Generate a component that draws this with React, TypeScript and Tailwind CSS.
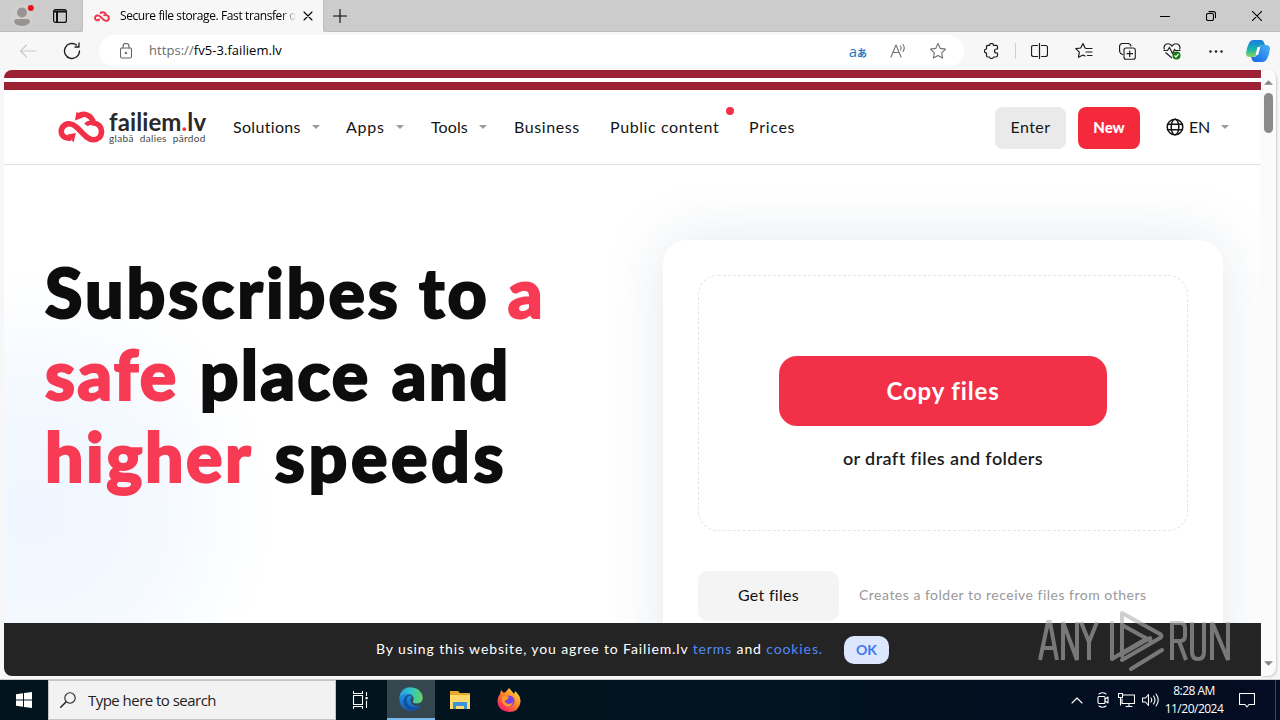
import { ReactNode } from "react";

function Caret() {
  return <svg viewBox="0 0 8 4" className="h-1 w-2 shrink-0"><path d="M0 0h8L4 4z" fill="#9b9b9b" /></svg>;
}

function CloudLogo({ className, color }: { className: string; color: string }) {
  return (
    <svg viewBox="0 0 46 32" className={className} fill="none" stroke={color} strokeWidth="5.600" strokeLinejoin="round">
      <path d="M20 5C25 1.500 33 3.500 35 12C40 12.500 43 16 43 20.500C43 26 39 29 34.500 28.800C29 28.600 25 23 20 18C16 14 12.500 11.700 8.500 13C3 14.800 1.500 20 3.800 24C5.500 26.500 8.500 27.500 12.500 27" />
      <path d="M35.500 12C31 11 29 12 27.500 14" strokeWidth="4.500" />
      <path d="M18 0.500l-1.500 9l8-3zM9 23.500l8.500-1.500l-2.500 9.500z" fill={color} strokeWidth="0" />
    </svg>
  );
}

function Icon({ children, className = "size-[18px]", view = "0 0 18 18" }: { children: ReactNode; className?: string; view?: string }) {
  return (
    <svg viewBox={view} className={`${className} shrink-0`} fill="none" stroke="currentColor" strokeWidth="1.1" strokeLinecap="round" strokeLinejoin="round">
      {children}
    </svg>
  );
}

function TabBar() {
  return (
    <div className="flex h-8 shrink-0 items-stretch bg-[#cccccc]">
      <div className="flex w-[83px] items-center rounded-br-[6px] border-b border-r border-[#bdbdbd]">
        <svg viewBox="0 0 24 24" className="ml-[10px] size-6">
          <circle cx="12" cy="12" r="11.500" fill="#d2d0ce" />
          <circle cx="12" cy="8.500" r="5" fill="#979593" />
          <path d="M4 18q0-3 3-3h10q3 0 3 3q-2 4-8 4t-8-4" fill="#979593" />
          <circle cx="20.800" cy="4" r="3" fill="#e81123" />
        </svg>
        <svg viewBox="0 0 14 14" className="ml-[19px] size-[14px]" fill="none" stroke="#111">
          <rect x=".6" y=".6" width="12.800" height="12.800" rx="2" strokeWidth="1.200" />
          <path d="M1 2.500h12M4 3v10" strokeWidth="2" />
        </svg>
      </div>
      <div className="flex w-[240px] shrink-0 items-center bg-[#f7f7f7] pl-[11px]">
        <CloudLogo className="h-[11px] w-4 shrink-0" color="#f23148" />
        <div className="ml-[10px] w-[176px] shrink-0 overflow-hidden whitespace-nowrap bg-linear-to-r from-black from-90% to-[#f7f7f7] bg-clip-text text-[12px] tracking-[-0.4px] text-transparent">Secure file storage. Fast transfer o</div>
        <Icon className="ml-[7px] size-[10px] text-black" view="0 0 10 10"><path d="M1 1l8 8M9 1l-8 8" /></Icon>
      </div>
      <div className="flex flex-1 items-center rounded-bl-[6px] border-b border-l border-[#bdbdbd] text-black">
        <Icon className="ml-[9px] size-[14px]" view="0 0 14 14"><path d="M.5 7h13M7 .5v13" /></Icon>
        <div className="flex-1" />
        <Icon className="size-[10px]" view="0 0 10 10"><path d="M0 5.500h10" strokeWidth="1" /></Icon>
        <Icon className="ml-9 size-[10px]" view="0 0 10 10"><rect x=".5" y="2.500" width="7" height="7" rx="1.500" /><path d="M3 .6h4.500q2 0 2 2v4" /></Icon>
        <Icon className="ml-9 mr-[18px] size-[10px]" view="0 0 10 10"><path d="M.3.3l9.400 9.400M9.700.3L.3 9.700" /></Icon>
      </div>
    </div>
  );
}

function Toolbar() {
  return (
    <div className="flex h-[38px] shrink-0 items-center bg-[#f7f7f7] text-[#1b1b1b]">
      <Icon className="ml-[19px] h-[14px] w-[18px] text-[#c9c9c9]" view="0 0 18 14"><path d="M17 7H1.500M7.500 1l-6 6l6 6" /></Icon>
      <Icon className="ml-[26px] size-[18px]"><path d="M16.500 9a7.500 7.500 0 1 1-3-6M16 1v4h-4" strokeWidth="1.300" /></Icon>
      <div className="ml-[18px] flex h-8 w-[865px] shrink-0 items-center rounded-full bg-white">
        <Icon className="ml-[21px] h-4 w-3 text-[#666]" view="0 0 12 16"><rect x=".5" y="5" width="11" height="10" rx="1.500" /><path d="M3 5V3.500q0-3 3-3t3 3V5" /><circle cx="6" cy="10" r=".6" fill="currentColor" /></Icon>
        <span className="ml-[17px] text-[13px] tracking-[0.05px] text-[#6b6b6b]">https://<span className="text-black">fv5-3.failiem.lv</span></span>
        <div className="flex-1" />
        <span className="flex items-baseline leading-none text-[#1f78c8]"><span className="text-[15px]">a</span><span className="font-['Noto_Sans_CJK_JP',sans-serif] text-[10px] font-bold leading-none">あ</span></span>
        <Icon className="ml-[23px] h-4 w-[17px] text-[#707070]" view="0 0 17 16"><path d="M1 14L6 2l5 12M3 9.500h6M10.500 3q1.500 2 0 4M13 1.500q2.500 3.500 0 7" /></Icon>
        <Icon className="ml-[22px] mr-[17px] size-[18px] text-[#707070]"><path d="M9 1.500l2.300 4.900l5.200.7l-3.800 3.700l.9 5.300L9 13.600l-4.600 2.500l.9-5.300L1.500 7.100l5.200-.7z" /></Icon>
      </div>
      <Icon className="ml-5 size-4" view="0 0 16 16"><path strokeWidth="1.200" d="M2.500 3q.5-.6 1.500-.6h1.500q.2-2 2-2t2 2H12q1.500 0 1.500 1.500V6h-1q-2 0-2 2t2 2h1v2.500q0 1.500-1.500 1.500H9.500q-.2 1.500-2 1.500t-2-1.500H4q-1.500 0-1.500-1.500V10Q.4 9.800.4 8t2.100-2z" /></Icon>
      <div className="ml-[15px] h-4 w-px shrink-0 bg-[#cfcfcf]" />
      <Icon className="ml-[15px] h-4 w-[17px]" view="0 0 17 16"><path strokeWidth="1.200" d="M6.500 2.500h-4q-2 0-2 2v7q0 2 2 2h4M10.500 2.500h4q2 0 2 2v7q0 2-2 2h-4M8.500 .5v15" /></Icon>
      <Icon className="ml-[27px] size-[18px]"><path strokeWidth="1.200" d="M11.500 6.500L10 6L8 1.500L5.700 6L.8 6.700L4.300 10.200L3.500 15.300L8 13l2 1M11.500 6.500h5.500M11 10h6M12.500 13.500H17" /></Icon>
      <Icon className="ml-[26px] size-[17px]" view="0 0 17 17"><rect x="5" y="5" width="11.300" height="11.300" rx="2" /><path strokeWidth="1.200" d="M10.700 8v5.500M8 10.700h5.500M3.500 11.500q-2.500-1-2.900-3L.5 3.500q.2-2.500 2.500-3h6q2.500.2 3 2.500" /></Icon>
      <svg viewBox="0 0 18 18" className="ml-[27px] size-[18px] shrink-0" fill="none" stroke="#222" strokeWidth="1.200"><path d="M1.500 7.500Q0 3.500 3.500 2Q6.500 1 9 4Q11.500 1 14.500 2Q18 3.500 16.500 7.500M2.500 10.500L9 16M.5 8.500h4l2-3l3 6l2-4l1 1h5" /><circle cx="13.500" cy="13.500" r="4" fill="#107c10" stroke="none" /><path d="M11.500 13.500l1.500 1.500l2.500-3" stroke="white" /></svg>
      <svg viewBox="0 0 14 3" className="ml-[28px] h-[3px] w-[14px] shrink-0" fill="#222"><circle cx="1.500" cy="1.500" r="1.300" /><circle cx="7" cy="1.500" r="1.300" /><circle cx="12.500" cy="1.500" r="1.300" /></svg>
      <svg viewBox="0 0 24 24" className="ml-[23px] size-6 shrink-0">
        <defs>
          <linearGradient id="cpA" x1="0" y1="0" x2="0" y2="1"><stop stopColor="#1b7ce4" /><stop offset=".55" stopColor="#16b5a9" /><stop offset="1" stopColor="#8fd45e" /></linearGradient>
          <linearGradient id="cpB" x1="1" y1="0" x2="0" y2="1"><stop stopColor="#4cb3f4" /><stop offset="1" stopColor="#1464e8" /></linearGradient>
        </defs>
        <path d="M17 23H9q-2 0-2.800-2L5 18h3q2 0 2.700-2l2.500-8Q14 6 16 6h4q4 0 4 3.500Q23.500 15 21 20q-1.500 3-4 3" fill="url(#cpB)" />
        <path d="M7 1h8q2 0 2.800 2L19 6h-3q-2 0-2.700 2l-2.500 8q-.8 2-2.800 2H4q-4 0-4-3.500Q.5 9 3 4Q4.500 1 7 1" fill="url(#cpA)" />
        <path d="M11.500 8h2.800l-2.200 8H9.500z" fill="white" />
      </svg>
    </div>
  );
}

function Header() {
  return (
    <div className="flex h-[75px] shrink-0 items-center border-b border-[#e0e0e0] bg-white text-[16px] text-[#151515]">
      <CloudLogo className="ml-[54px] h-8 w-[47px] shrink-0" color="#f23148" />
      <div className="ml-1 w-[99px] shrink-0 whitespace-nowrap">
        <div className="text-[24px] font-bold leading-[22px] tracking-[0.1px] text-[#292929]">failiem<span className="text-[#f23148]">.</span>lv</div>
        <div className="text-[10px] leading-[10px] tracking-[0.35px] text-[#444] [word-spacing:3px]">glabā dalies pārdod</div>
      </div>
      <nav className="ml-[25px] flex items-center whitespace-nowrap">
        <div className="flex w-[113px] items-center gap-[11px]"><span className="tracking-[0.33px]">Solutions</span><Caret /></div>
        <div className="flex w-[85px] items-center gap-[11px]"><span className="tracking-[0.75px]">Apps</span><Caret /></div>
        <div className="flex w-[83px] items-center gap-[11px]"><span className="tracking-[0.1px]">Tools</span><Caret /></div>
        <span className="w-24 tracking-[0.6px]">Business</span>
        <span className="relative w-[139px] tracking-[0.6px]">Public content<i className="absolute left-[116px] top-[-8px] size-2 rounded-full bg-[#f23148]" /></span>
        <span className="w-[60px] tracking-[0.7px]">Prices</span>
      </nav>
      <div className="flex-1" />
      <div className="mt-px flex h-[42px] w-[71px] shrink-0 items-center justify-center rounded-lg bg-[#eaeaea] pb-px tracking-[0.4px]">Enter</div>
      <div className="ml-3 mt-px flex h-[42px] w-[62px] shrink-0 items-center justify-center rounded-lg bg-[#f4293c] text-[15px] font-black text-white">New</div>
      <Icon className="ml-[26px] size-[18px]"><g strokeWidth="1.500"><circle cx="9" cy="9" r="7.800" /><ellipse cx="9" cy="9" rx="3.800" ry="7.800" /><path d="M1.500 6.300h15M1.500 11.700h15" /></g></Icon>
      <span className="ml-[5px] w-8 shrink-0 tracking-[-0.2px]">EN</span><Caret />
      <div className="w-8 shrink-0" />
    </div>
  );
}

function UploadCard() {
  return (
    <section className="ml-[659px] mt-[75px] h-[440px] w-[560px] rounded-[24px] bg-white px-[35px] pt-[35px] shadow-[0_0_60px_rgba(70,100,130,0.15)]">
      <div className="flex h-[256px] flex-col items-center rounded-[20px] border border-dashed border-[#e5e5e5] pt-20">
        <div className="flex h-[70px] w-[328px] items-center justify-center rounded-[18px] bg-[#f23148] text-[24px] font-bold tracking-[0.85px] text-white">Copy files</div>
        <div className="mt-[18px] text-[18px] font-semibold leading-7 tracking-[0.4px] text-[#1c1c1c]">or draft files and folders</div>
      </div>
      <div className="mt-10 flex items-center whitespace-nowrap">
        <div className="flex h-[50px] w-[141px] items-center justify-center rounded-[10px] bg-[#f4f4f4] pb-0.5 text-[16px] tracking-[0.3px] text-[#111]">Get files</div>
        <span className="ml-5 pb-[3px] text-[14px] tracking-[0.5px] text-[#999]">Creates a folder to receive files from others</span>
      </div>
    </section>
  );
}

function Page() {
  return (
    <main className="flex h-[606px] w-[1257px] flex-col overflow-hidden rounded-tl-lg rounded-bl-lg bg-white font-[Lato,sans-serif]">
      <div className="h-2 shrink-0 bg-[#9b2034]" />
      <div className="h-1 shrink-0 bg-white" />
      <div className="h-2 shrink-0 bg-[#9b2034]" />
      <Header />
      <div className="flex h-[458px] shrink-0 overflow-hidden bg-[radial-gradient(circle_at_30px_345px,#eff6ff_0px,#f4f9ff_120px,#ffffff_240px)]">
        <h1 className="ml-[41px] mt-[86px] w-0 whitespace-nowrap text-[68px] font-black leading-[82px] text-[#0d0d0d] [-webkit-text-stroke:2px_currentColor]">
          <div className="tracking-[3px] [word-spacing:-1px]">Subscribes to <span className="text-[#f73b54]">a</span></div>
          <div className="tracking-[2.2px] [word-spacing:3px]"><span className="text-[#f73b54]">safe</span> place and</div>
          <div className="[word-spacing:2px]"><span className="tracking-[2.5px] text-[#f73b54]">higher</span><span className="tracking-[3.6px]"> speeds</span></div>
        </h1>
        <div className="-ml-[41px] shrink-0"><UploadCard /></div>
      </div>
      <div className="flex h-[53px] shrink-0 items-center whitespace-nowrap bg-[#242424] pl-[372px] text-[14px] text-white">
        <span className="w-[448px] pb-0.5 tracking-[0.88px]">By using this website, you agree to Failiem.lv <span className="text-[#5389f5]">terms</span> and <span className="text-[#5389f5]">cookies.</span></span>
        <div className="ml-5 flex h-[28px] w-[45px] items-center justify-center rounded-[10px] bg-[#dce6fc] font-bold text-[#3b78ee]">OK</div>
      </div>
    </main>
  );
}

function Watermark() {
  return (
    <div className="absolute left-[1038px] top-[608px] h-16 w-[194px] opacity-60">
      <svg viewBox="0 0 194 64" className="h-16 w-[194px]" fill="none" stroke="#b0b0b0" strokeWidth="4">
        <path d="M2 52L10 14h2l7 38M5 40h12M25 52V14l14 38V14M43 14l8 20l8-20M51 33v19" />
        <path d="M74 15v36l10-6l24-14M84 48V5l38 21q3 2 0 4l-38 22M84 17l31 17M93 61l31-19M84 16v30l28-16" strokeLinejoin="round" strokeLinecap="round" />
        <path d="M134 52V15h8q5 0 5 5v8q0 5-5 5h-8M141 33l7 19M154 14v30q0 7 6 7t6-7V14M174 52V14l16 38V14" />
      </svg>
    </div>
  );
}

function Taskbar() {
  return (
    <div className="flex h-10 shrink-0 items-center bg-linear-to-r from-[#02151e] via-[#02141f] to-[#030c22] text-white">
      <div className="flex w-12 justify-center"><svg viewBox="0 0 16 16" className="size-4" fill="white"><path d="M0 2.300L7 1.300V7.500H0zM8 1.100L16 0v7.500H8zM0 8.500h7v6.200L0 13.700zM8 8.500h8V16L8 14.900z" /></svg></div>
      <div className="flex h-10 w-72 items-center border border-[#c4c4c4] bg-[#f2f2f2] text-[#222]">
        <Icon className="ml-[11px] size-4" view="0 0 16 16"><circle cx="10" cy="6" r="5.200" /><path d="M6 10L.7 15.300" strokeWidth="1.500" /></Icon>
        <span className="ml-3 text-[15px] tracking-[-0.53px]">Type here to search</span>
      </div>
      <div className="flex w-[51px] justify-center"><Icon className="-ml-1 size-[18px]" view="-1 -1 18 18"><path d="M1.500 3.500h9v9h-9zM1.500-.5v2h9v-2M1.500 16.500v-2h9v2M14.500.5v3M14.500 9v6.500M14 5.500h1.200v1.200H14z" /></Icon></div>
      <div className="flex h-10 w-12 items-center justify-center border-b-2 border-[#76b9ed] bg-[#35464f]">
        <svg viewBox="0 0 24 24" className="size-6">
          <defs>
            <linearGradient id="edgeTop" x1="0" x2="1"><stop stopColor="#2c9fe3" /><stop offset=".5" stopColor="#32c4c9" /><stop offset="1" stopColor="#68d45b" /></linearGradient>
            <linearGradient id="edgeSide" x1="0" y1="0" x2="0" y2="1"><stop stopColor="#239be2" /><stop offset="1" stopColor="#1260bd" /></linearGradient>
          </defs>
          <path d="M.3 10Q0 20 8 23.300Q17 26 22 18Q17 21 13 17Q10 13 13 10L6 4z" fill="url(#edgeSide)" />
          <path d="M.5 10Q2 0 12 .2Q23 1 23.800 11Q23.500 16 18 16.500Q13 16.500 14 14Q16 11 12.500 8Q6 4 .5 10" fill="url(#edgeTop)" />
          <path d="M12 8Q7 9 7.500 14Q9 21 18 20Q22 18 22 18Q17 25 10 23Q3 19 5 12Q7 7 12 8" fill="#124f9c" />
        </svg>
      </div>
      <div className="flex w-[49px] justify-center"><svg viewBox="0 0 22 20" className="h-5 w-[22px]"><path d="M1 1h8l2 2h10v16H1z" fill="#e8a72c" /><path d="M1 5h20v14H1z" fill="#ffd96a" /><path d="M4 19v-7h14v7h-3v-3H7v3z" fill="#3995da" /></svg></div>
      <div className="flex w-[49px] justify-center"><svg viewBox="0 0 24 24" className="size-6"><defs><linearGradient id="fox" x1="1" y1="0" x2=".2" y2="1"><stop stopColor="#fff044" /><stop offset=".5" stopColor="#ff8728" /><stop offset="1" stopColor="#f5156b" /></linearGradient></defs><path d="M3 6Q4 3 4 2L7 5Q10 3 12 0Q15 3 17 6Q18 4 18 3Q24 8 23.500 14Q22 24 12 24Q1 23 .5 14Q.5 9 3 6" fill="url(#fox)" /><circle cx="12" cy="13" r="5.500" fill="#7542e5" /><path d="M5 9Q9 7 12 9L10 12Q7 12 8 14Q12 18 16 14Q14 20 9 18Q4 15 5 9" fill="#ff9a28" /></svg></div>
      <div className="flex-1" />
      <Icon className="h-2 w-3" view="0 0 12 8"><path d="M1 7l5-5l5 5" /></Icon>
      <Icon className="ml-[14px] h-4 w-3" view="0 0 12 16"><rect x="1" y="4.500" width="7" height="7" rx="1" /><path d="M8 7l3-2v6l-3-2M2 2Q5.500-.5 9 2M2 14q3.500 2.500 7 0" /></Icon>
      <Icon className="ml-[9px] h-4 w-[17px]" view="0 0 17 16"><path d="M5 3h11.500v8.500H4V7M8 14.500h6M11 11.500v3M.5 1.500h4v4h-4zM2.500 6v7" /></Icon>
      <Icon className="ml-[7px] h-4 w-[17px]" view="0 0 17 16"><path d="M.5 6h3l3-3.500v11L3.500 10h-3zM9 6q1.500 2 0 4M11.500 4q3 4 0 8M14 2q4.500 6 0 12" /></Icon>
      <div className="ml-[5px] flex w-[60px] flex-col items-center whitespace-nowrap text-[12px] leading-[18px] tracking-[-0.5px]"><span>8:28 AM</span><span>11/20/2024</span></div>
      <Icon className="ml-[15px] size-4" view="0 0 16 16"><path d="M.5 1.500h15v11H10L8 15l-2-2.500H.5z" /></Icon>
      <div className="ml-[20px] h-10 w-px bg-[#414653]" /><div className="w-1" />
    </div>
  );
}

export default function App() {
  return (
    <div className="relative flex h-[720px] w-[1280px] flex-col overflow-hidden bg-[#f7f7f7] font-['Open_Sans',sans-serif]">
      <TabBar />
      <Toolbar />
      <div className="flex h-[610px] shrink-0 border-b border-[#ccc] pl-1">
        <Page />
        <div className="flex h-[606px] w-[15px] flex-col items-center rounded-r-lg bg-[#fbfbfb] shadow-[1px_1px_2px_#ccc]">
          <svg viewBox="0 0 10 5" className="mt-[10px] h-[5px] w-[9px]"><path d="M5 0l5 5H0z" fill="#858585" /></svg>
          <div className="mt-2 h-10 w-[9px] rounded-full bg-[#8a8a8a]" />
          <div className="flex-1" />
          <svg viewBox="0 0 10 5" className="mb-[10px] h-[5px] w-[9px]"><path d="M0 0h10L5 5z" fill="#858585" /></svg>
        </div>
      </div>
      <Taskbar />
      <Watermark />
    </div>
  );
}
